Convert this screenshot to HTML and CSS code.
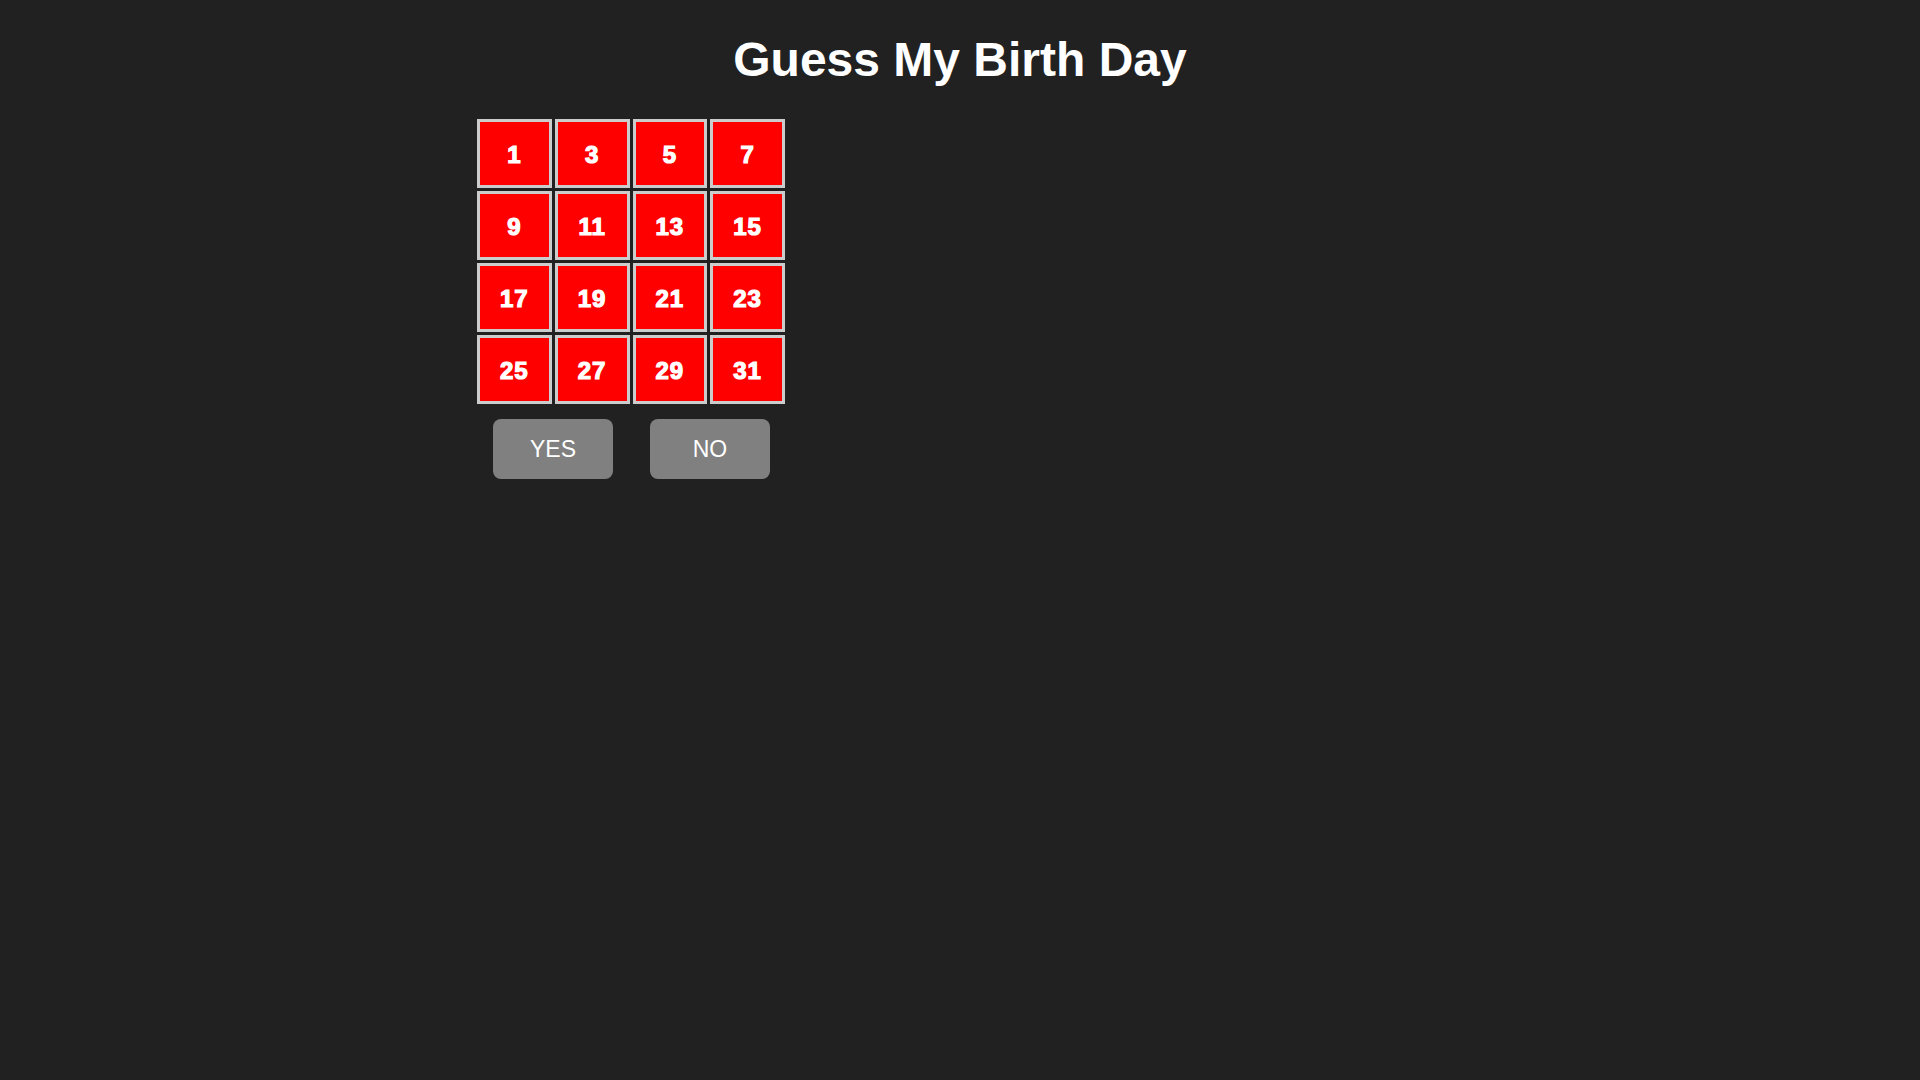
FILE: index.html
```html
<!DOCTYPE html>
<html>
<head>
<meta charset="utf-8">
<title>Guess My Birth Day</title>
<link rel="stylesheet" href="styles.css">
</head>
<body>
<h1 class="title">Guess My Birth Day</h1>
<div class="game">
  <div class="board">
    <div class="cell">1</div><div class="cell">3</div><div class="cell">5</div><div class="cell">7</div>
    <div class="cell">9</div><div class="cell">11</div><div class="cell">13</div><div class="cell">15</div>
    <div class="cell">17</div><div class="cell">19</div><div class="cell">21</div><div class="cell">23</div>
    <div class="cell">25</div><div class="cell">27</div><div class="cell">29</div><div class="cell">31</div>
  </div>
  <div class="actions">
    <button class="btn">YES</button>
    <button class="btn">NO</button>
  </div>
</div>
</body>
</html>
```
FILE: styles.css
```css
html, body {
  margin: 0;
  padding: 0;
  background: #212121;
  font-family: "Liberation Sans", Arial, sans-serif;
  color: #fff;
}
body {
  min-height: 1080px;
}
.title {
  margin: 0;
  padding-top: 32px;
  font-size: 48px;
  line-height: 55px;
  font-weight: bold;
  text-align: center;
}
.game {
  margin-top: 32px;
  padding-left: 477px;
  width: 308px;
}
.board {
  display: grid;
  grid-template-columns: repeat(4, 1fr);
  grid-auto-rows: 69px;
  gap: 3px;
  width: 308px;
}
.cell {
  box-sizing: border-box;
  background: #ff0000;
  border: 3px solid #cccccc;
  display: flex;
  align-items: center;
  justify-content: center;
  padding-top: 2px;
  font-size: 24px;
  font-weight: bold;
  color: #fff;
  -webkit-text-stroke: 1.2px #fff;
  letter-spacing: 1px;
}
.actions {
  display: flex;
  justify-content: center;
  gap: 37px;
  margin-top: 15px;
  padding-left: 1px;
}
.btn {
  width: 120px;
  height: 60px;
  border: none;
  border-radius: 8px;
  background: #808080;
  color: #fff;
  font-family: "Liberation Sans", Arial, sans-serif;
  font-size: 23px;
  padding: 0;
}
```
